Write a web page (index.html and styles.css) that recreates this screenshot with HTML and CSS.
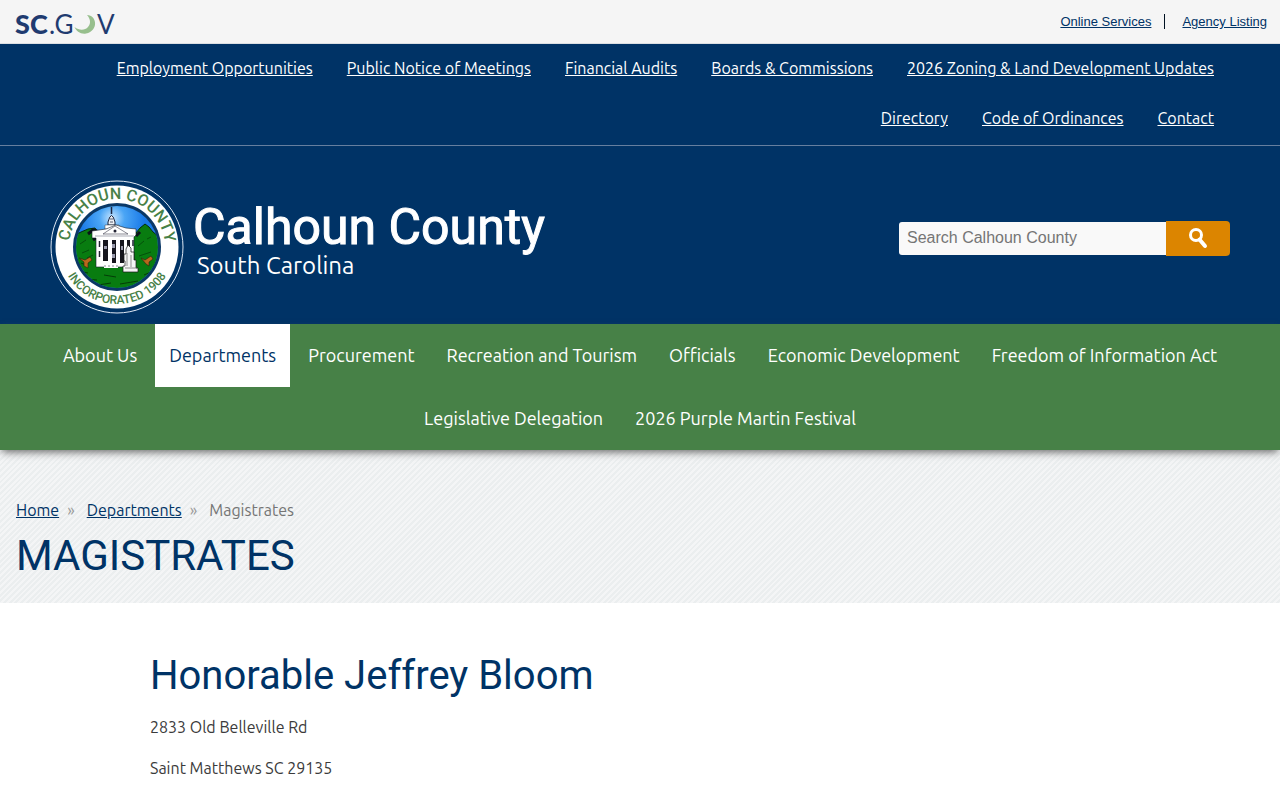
FILE: index.html
```html
<!DOCTYPE html>
<html lang="en">
<head>
<meta charset="utf-8">
<meta name="viewport" content="width=device-width, initial-scale=1">
<title>Magistrates | Calhoun County</title>
<link rel="stylesheet" href="styles.css">
</head>
<body>
<div class="state-bar">
  <a class="state-logo" href="#" aria-label="SC.GOV">
    <svg width="108" height="36" viewBox="0 0 108 36">
      <text class="state-bold" x="0" y="28">SC</text>
      <text class="state-light" x="34" y="28">.G</text>
      <path d="M72 9C82 9 84 25 71 27.500C66 28.500 61 25 59.500 21C64 24.500 70 24.500 73 21C76.500 17.500 75 12 72 9Z" fill="#97bf8d"/>
      <text class="state-light" x="82" y="28">V</text>
    </svg>
  </a>
  <nav class="state-links" aria-label="State">
    <a href="#">Online Services</a>
    <a href="#">Agency Listing</a>
  </nav>
</div>
<header>
  <nav class="utility" aria-label="Utility">
    <a href="#">Employment Opportunities</a>
    <a href="#">Public Notice of Meetings</a>
    <a href="#">Financial Audits</a>
    <a href="#">Boards &amp; Commissions</a>
    <a href="#">2026 Zoning &amp; Land Development Updates</a>
    <a href="#">Directory</a>
    <a href="#">Code of Ordinances</a>
    <a href="#">Contact</a>
  </nav>
  <div class="masthead">
    <a class="brand" href="#">
      <svg class="seal" width="134" height="134" viewBox="0 0 134 134" aria-hidden="true">
        <defs>
          <path id="arc-top" d="M19 67A48 48 0 0 1 67 19A48 48 0 0 1 115 67V90"/>
          <path id="arc-bottom" d="M10 67A57 57 0 0 0 124 67"/>
          <clipPath id="scene"><circle cx="67" cy="67" r="41"/></clipPath>
          <radialGradient id="sky" cx="62" cy="38" r="32" gradientUnits="userSpaceOnUse">
            <stop offset="0" stop-color="#c8e6ff"/><stop offset=".4" stop-color="#4aa5f5"/><stop offset="1" stop-color="#1a7ae8"/>
          </radialGradient>
        </defs>
        <circle cx="67" cy="67" r="66" fill="#036" stroke="#dfe9f5" stroke-width="1"/>
        <circle cx="67" cy="67" r="61.500" fill="#fff"/>
        <circle cx="67" cy="67" r="44" fill="#0b3866"/>
        <g clip-path="url(#scene)">
          <path d="M20 20H114V114H20Z" fill="url(#sky)"/>
          <path d="M20 62L25 55L31 52L38 49L45 48L50 55V84H20Z" fill="#087c10" stroke="#052d0b"/>
          <path d="M82 59L86 53L90 48L95 44L99 47L103 52L113 60V86H82Z" fill="#087c10" stroke="#052d0b"/>
          <path d="M20 80C36 76 96 76 114 80V114H20Z" fill="#087c10"/>
          <path d="M29 91L38 93M35 99L47 100M48 105L61 103M70 104L88 101M78 107L91 104M31 83L36 85M94 95L103 91M54 95L66 97" stroke="#043c08" fill="none"/>
          <path d="M30 64L36 60M32 73L39 70M37 78L43 75M88 66L94 61M89 76L101 72M97 59L101 57" stroke="#04500b" fill="none"/>
          <path d="M38 54L43 50L47 51M86 56L90 52M43 60L47 57" stroke="#0b121b" stroke-width="3"/>
          <path d="M61.500 27V34" stroke="#1b2640" stroke-width="1.500"/>
          <path d="M58 42Q61.500 29 65 42V45H58Z" fill="#f0f2f5" stroke="#172039"/>
          <path d="M60 39H63M60 42H63" stroke="#555d70"/>
          <path d="M55 45H69V49H55Z" fill="#fff" stroke="#39424e" stroke-width=".5"/>
          <path d="M42 51L56 49L66 45L76 48L86 49V55L84 57V82H80V87H46V58H42Z" fill="#fff" stroke="#111b28" stroke-width=".6"/>
          <path d="M53 54L65 46L78 54Z" fill="#fff" stroke="#39394a" stroke-width=".6"/>
          <path d="M45 56H84" stroke="#858796" stroke-width=".7"/>
          <circle cx="65" cy="51" r="1.500" fill="#223"/>
          <path d="M53 60H58V81H53ZM62 60H66V83H62ZM70 60H74V83H70ZM77 60H80V80H77Z" fill="#16161d"/>
          <path d="M54 66H57V69H54ZM62 64H65V68H62ZM62 74H65V78H62ZM71 66H73V70H71Z" fill="#9a9bac"/>
          <path d="M49.500 61V67M49.500 71V77M83 60V66" stroke="#202333" stroke-width="1.500"/>
          <path d="M54 86H68" stroke="#fff" stroke-width="4"/>
          <path d="M54 86H68" stroke="#8a8d96" stroke-dasharray="2 2"/>
          <path d="M73 91V86H75V81H74V74H76V69L78 65L81 68V72H84V80H86V88H88V92H73Z" fill="#f5f5f5" stroke="#171717" stroke-width=".7"/>
          <path d="M77 73V86M81 75V87M75 88H87" stroke="#666" stroke-width=".7"/>
          <path d="M29 78L35 80L40 77L42 80L38 83V88L34 86V82ZM91 78L95 80L101 76L103 79L99 82V86L96 84Z" fill="#b8691c" stroke="#30200d" stroke-width=".6"/>
        </g>
        <text class="seal-top"><textPath href="#arc-top" startOffset="76">CALHOUN COUNTY</textPath></text>
        <text class="seal-bottom"><textPath href="#arc-bottom" startOffset="50%">INCORPORATED 1908</textPath></text>
      </svg>
      <span class="brand-text">
        <span class="brand-name">Calhoun County</span>
        <span class="brand-state">South Carolina</span>
      </span>
    </a>
    <form class="search" role="search">
      <input type="search" aria-label="Search Calhoun County" placeholder="Search Calhoun County">
      <button type="submit" aria-label="Search">
        <svg width="20" height="22" viewBox="0 0 20 22" fill="none" stroke="#fff"><circle cx="8" cy="8" r="5.500" stroke-width="3"/><path d="M11.500 12.500L17 19" stroke-width="4" stroke-linecap="round"/></svg>
      </button>
    </form>
  </div>
</header>
<nav class="main-nav" aria-label="Main">
  <a href="#">About Us</a>
  <a class="active" href="#">Departments</a>
  <a href="#">Procurement</a>
  <a href="#">Recreation and Tourism</a>
  <a href="#">Officials</a>
  <a href="#">Economic Development</a>
  <a href="#">Freedom of Information Act</a>
  <a href="#">Legislative Delegation</a>
  <a href="#">2026 Purple Martin Festival</a>
</nav>
<div class="page-title">
  <nav class="crumbs" aria-label="Breadcrumb">
    <a href="#">Home</a><span class="sep">»</span><a href="#">Departments</a><span class="sep">»</span><span>Magistrates</span>
  </nav>
  <h1>MAGISTRATES</h1>
</div>
<main class="content">
  <h2>Honorable Jeffrey Bloom</h2>
  <p>2833 Old Belleville Rd</p>
  <p>Saint Matthews SC 29135</p>
</main>
</body>
</html>
```
FILE: styles.css
```css
* { box-sizing: border-box; }
body { margin: 0; background: #fff; color: #3b3b3b; font: 400 16px/25px Ubuntu, "Open Sans", "Noto Sans", sans-serif; }
a { color: #036; }

.state-bar { display: flex; justify-content: space-between; align-items: center; height: 44px; padding: 0 13px 0 15px; background: #f5f5f5; border-bottom: 1px solid #dcdfe3; }
.state-logo { display: flex; padding-top: 4px; }
.state-bold { font: 900 27px Lato, sans-serif; fill: #1f3b70; }
.state-light { font: 400 26px Lato, sans-serif; fill: #1f3b70; }
.state-links { display: flex; font: 13px/15px "Liberation Sans", Arial, sans-serif; }
.state-links a + a { margin-left: 13px; padding-left: 17px; border-left: 1px solid #012; }

header { background: #036; color: #fff; }
.utility { display: flex; flex-wrap: wrap; justify-content: flex-end; column-gap: 2px; padding: 0 50px 1px; border-bottom: 1px solid #667f9f; }
.utility a { padding: 12px 16px 13px; color: #fff; }

.masthead { display: flex; justify-content: space-between; align-items: center; padding: 34px 50px 10px; }
.brand { display: flex; align-items: center; gap: 9px; color: #fff; text-decoration: none; }
.seal { display: block; }
.seal text { font-family: Roboto, sans-serif; font-weight: 500; fill: #478147; text-anchor: middle; }
.seal .seal-top { font-size: 16px; }
.seal .seal-bottom { font-size: 12px; }
.brand-text { display: flex; flex-direction: column; padding-bottom: 12px; }
.brand-name { font: 400 50px/50px Roboto, sans-serif; -webkit-text-stroke: 1px #fff; }
.brand-state { padding-left: 4px; font-size: 24px; line-height: 28px; }

.search { display: flex; align-items: center; margin-bottom: 18px; }
.search input { width: 267px; height: 33px; padding: 0 8px; border: 0; border-radius: 3px 0 0 3px; background: #f9f9f9; color: #333; font: 16px "Liberation Sans", Arial, sans-serif; }
.search input::placeholder { color: #757575; }
.search button { display: grid; place-items: center; width: 64px; height: 35px; padding: 0; border: 0; border-radius: 0 4px 4px 0; background: #dc8500; }

.main-nav { position: relative; display: flex; flex-wrap: wrap; justify-content: center; gap: 0 4px; padding: 0 45px; background: #478147; box-shadow: 0 4px 8px -2px #666; font-size: 18px; }
.main-nav a { padding: 19px 14px; color: #fff; text-decoration: none; }
.main-nav .active { background: #fff; color: #036; }

.page-title { padding: 48px 16px 18px; background: repeating-linear-gradient(135deg, #f4f5f6 0 2px, #ebeeef 2px 4px); }
.crumbs { display: flex; color: #757575; }
.crumbs .sep { margin: 0 12px 0 8px; color: #999; }
h1, h2 { margin: 0; color: #036; font-family: Roboto, sans-serif; font-weight: 400; }
h1 { margin-top: 4px; font-size: 42px; line-height: 58px; }

.content { padding: 50px 150px 0; }
h2 { font-size: 40px; line-height: 46px; }
p { margin: 16px 0; }
```
